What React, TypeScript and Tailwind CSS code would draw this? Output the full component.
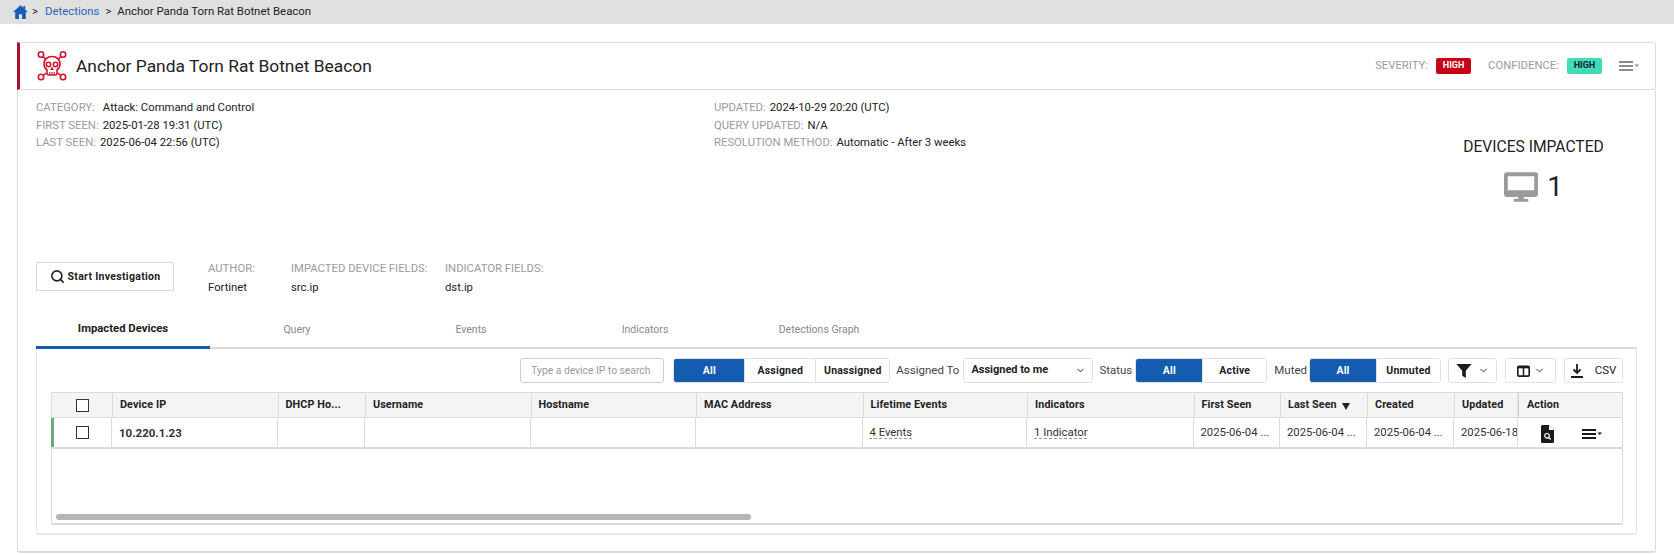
import { ChevronDown, Search } from "lucide-react";

const font = "font-['Roboto',sans-serif]";

const HomeIcon = () => (
  <svg width="15" height="14" viewBox="0 0 24 22" fill="#1a5db5">
    <path d="M12 0 0 11h3.500v11h6v-7.500h5V22h6V11H24L19.500 7V1.500h-3V4.300z" />
  </svg>
);

const SkullIcon = () => (
  <svg width="30" height="32" viewBox="0 0 30 32" fill="none" stroke="#d0142c" strokeWidth="1.600">
    <circle cx="4" cy="4.500" r="2.700" />
    <circle cx="26" cy="4.500" r="2.700" />
    <circle cx="4" cy="27" r="2.700" />
    <circle cx="26" cy="27" r="2.700" />
    <path d="M6 6.500 9 9.500M24 6.500l-3 3M6.300 25.500l3-2.500M23.700 25.500l-3-2.500" />
    <path d="M15 6.500c-5 0-8 3.300-8 7.500 0 3 1.300 4.800 3 6v3.500c0 1 .6 1.500 1.500 1.500h7c.9 0 1.500-.5 1.500-1.500V20c1.700-1.200 3-3 3-6 0-4.200-3-7.500-8-7.500z" />
    <circle cx="11.500" cy="14.500" r="2.200" />
    <circle cx="18.500" cy="14.500" r="2.200" />
    <path d="M15 17.500l-1 2h2zM12.800 22v3M15 22v3M17.200 22v3" strokeWidth="1.100" />
  </svg>
);

const MenuIcon = ({ color }: { color: string }) => (
  <svg width="20" height="10" viewBox="0 0 20 10" fill={color}>
    <rect x="0" y="0" width="14" height="2" />
    <rect x="0" y="4" width="14" height="2" />
    <rect x="0" y="8" width="14" height="2" />
    <path d="M15.500 3.500h4.500l-2.250 2.400z" />
  </svg>
);

const MonitorIcon = () => (
  <svg width="34" height="30" viewBox="0 0 36 31" fill="#9a9a9a">
    <path fillRule="evenodd" d="M3 0h30a3 3 0 0 1 3 3v20a3 3 0 0 1-3 3H3a3 3 0 0 1-3-3V3a3 3 0 0 1 3-3zm1 4v15h28V4z" />
    <path d="M15 26h6v2h3.500a1.500 1.500 0 0 1 0 3h-13a1.500 1.500 0 0 1 0-3H15z" />
  </svg>
);

const FilterIcon = () => (
  <svg width="16" height="14" viewBox="0 0 14 13" fill="#1b1b1b">
    <path d="M0 0h14L8.700 6.200V13l-3.400-2.200v-4.600z" />
  </svg>
);

const ColumnsIcon = () => (
  <svg width="13" height="12" viewBox="0 0 12 11" fill="none" stroke="#1b1b1b">
    <rect x="0.750" y="1.200" width="10.500" height="9" rx="1" strokeWidth="1.500" />
    <path d="M0.750 2h10.500" strokeWidth="2" />
    <path d="M6 2v8" strokeWidth="1.400" />
  </svg>
);

const DownloadIcon = () => (
  <svg width="12" height="14" viewBox="0 0 12 14" fill="none" stroke="#1b1b1b" strokeWidth="1.800">
    <path d="M6 0v8.500M2.500 5.500 6 9l3.500-3.500M0 13h12" />
  </svg>
);

const FileSearchIcon = () => (
  <svg width="13" height="18" viewBox="0 0 13 18">
    <path d="M1.500 0H8l5 5v11.500a1.500 1.500 0 0 1-1.500 1.500h-10A1.500 1.500 0 0 1 0 16.500v-15A1.500 1.500 0 0 1 1.500 0z" fill="#1b1b1b" />
    <path d="M8 0v5h5" fill="#fff" />
    <circle cx="6" cy="10.800" r="2.300" fill="none" stroke="#fff" strokeWidth="1.200" />
    <path d="m7.700 12.500 2 2" stroke="#fff" strokeWidth="1.300" />
  </svg>
);

const Checkbox = () => <div className="w-[13px] h-[13px] border-[1.5px] border-[#333] bg-white" />;

const Meta = ({ label, value, gap }: { label: string; value: string; gap?: string }) => (
  <div className={`flex h-[17.5px] items-center ${gap ?? "gap-1"}`}>
    <span className="text-[#9b9b9b]">{label}</span>
    <span className="text-[#222]">{value}</span>
  </div>
);

const Field = ({ label, value, width }: { label: string; value: string; width: string }) => (
  <div className={`flex flex-col gap-1 text-[11.3px] ${width}`}>
    <span className="text-[#9b9b9b] leading-[15px]">{label}</span>
    <span className="text-[#222] leading-[15px]">{value}</span>
  </div>
);

const Seg = ({ options, widths }: { options: string[]; widths: string[] }) => (
  <div className="flex h-[25px] rounded-[3px] border border-[#e2e2e2] overflow-hidden text-[10.5px] font-bold tracking-[0.2px]">
    {options.map((o, i) => (
      <div
        key={o}
        className={`flex items-center justify-center ${widths[i]} ${
          i === 0 ? "bg-[#135cb0] text-white" : "bg-white text-[#222] border-l border-[#e2e2e2]"
        }`}
      >
        {o}
      </div>
    ))}
  </div>
);

const columns = [
  { name: "Device IP", width: "w-[165.500px]" },
  { name: "DHCP Ho...", width: "w-[87.500px]" },
  { name: "Username", width: "w-[165.500px]" },
  { name: "Hostname", width: "w-[165.500px]" },
  { name: "MAC Address", width: "w-[166.500px]" },
  { name: "Lifetime Events", width: "w-[164.500px]" },
  { name: "Indicators", width: "w-[166.500px]" },
  { name: "First Seen", width: "w-[86.500px]" },
  { name: "Last Seen", width: "w-[87px]" },
  { name: "Created", width: "w-[87px]" },
  { name: "Updated", width: "w-[64px]" },
];

const dashed = "underline decoration-dashed decoration-[#999] underline-offset-2";

const cells: Record<string, { text: string; cls?: string }> = {
  "Device IP": { text: "10.220.1.23", cls: "font-bold text-[11.500px]" },
  "Lifetime Events": { text: "4 Events", cls: dashed },
  Indicators: { text: "1 Indicator", cls: dashed },
  "First Seen": { text: "2025-06-04 ..." },
  "Last Seen": { text: "2025-06-04 ..." },
  Created: { text: "2025-06-04 ..." },
  Updated: { text: "2025-06-18" },
};

export default function App() {
  return (
    <div className={`${font} w-[1674px] h-[555px] bg-white overflow-hidden text-[#222]`}>
      <div className="h-6 bg-[#e0e0e0] flex items-center pl-[13px] gap-[5px] text-[11.4px]">
        <HomeIcon />
        <span className="-ml-[1px]">&gt;</span>
        <span className="text-[#2a66b5] ml-[2px]">Detections</span>
        <span className="ml-[1px]">&gt;</span>
        <span className="ml-[1px]">Anchor Panda Torn Rat Botnet Beacon</span>
      </div>

      <div className="ml-[17px] w-[1639px] mt-[18px]">
        <div className="h-[48px] flex items-center border border-[#dcdcdc] border-l-[3px] border-l-[#a8112a] rounded-tr-[3px] rounded-br-[3px]">
          <div className="ml-[17px]"><SkullIcon /></div>
          <h1 className="ml-[9px] text-[17.4px] text-[#222]">Anchor Panda Torn Rat Botnet Beacon</h1>
          <div className="ml-auto flex items-center text-[11.3px] text-[#9b9b9b] pr-[16px]">
            <span>SEVERITY:</span>
            <span className="ml-2 w-[35px] h-4 rounded-[2px] bg-[#c70017] text-white text-[9px] font-bold flex items-center justify-center">HIGH</span>
            <span className="ml-[17px]">CONFIDENCE:</span>
            <span className="ml-2 w-[35px] h-4 rounded-[2px] bg-[#3fdcb8] text-[#123] text-[9px] font-bold flex items-center justify-center">HIGH</span>
            <div className="ml-[17px]"><MenuIcon color="#8c8c8c" /></div>
          </div>
        </div>

        <div className="h-[463px] border border-t-0 border-[#dcdcdc] rounded-b-[3px] border-b-2 flex flex-col">
          <div className="flex h-[172px] text-[11.3px]">
            <div className="w-[696px] pl-[18px] pt-[10px]">
              <Meta label="CATEGORY:" value="Attack: Command and Control" gap="gap-[8px]" />
              <Meta label="FIRST SEEN:" value="2025-01-28 19:31 (UTC)" />
              <Meta label="LAST SEEN:" value="2025-06-04 22:56 (UTC)" />
            </div>
            <div className="w-[622px] pt-[10px]">
              <Meta label="UPDATED:" value="2024-10-29 20:20 (UTC)" />
              <Meta label="QUERY UPDATED:" value="N/A" />
              <Meta label="RESOLUTION METHOD:" value="Automatic - After 3 weeks" />
            </div>
            <div className="flex-1 flex flex-col items-center pt-[48px] pl-[76px]">
              <div className="text-[15.6px] whitespace-nowrap leading-[18px]">DEVICES IMPACTED</div>
              <div className="flex items-center gap-[9px] mt-[15px]">
                <MonitorIcon />
                <span className="text-[28px] leading-[31px]">1</span>
              </div>
            </div>
          </div>

          <div className="flex items-center h-[29px] pl-[18px]">
            <button className="w-[138px] h-[29px] border border-[#d8d8d8] rounded-[1px] flex items-center justify-center gap-[3px] text-[10.5px] font-bold tracking-[0.3px]">
              <Search size={15} strokeWidth={2.5} />
              Start Investigation
            </button>
            <div className="flex ml-[34px] mt-[2px]">
              <Field label="AUTHOR:" value="Fortinet" width="w-[83px]" />
              <Field label="IMPACTED DEVICE FIELDS:" value="src.ip" width="w-[154px]" />
              <Field label="INDICATOR FIELDS:" value="dst.ip" width="w-[150px]" />
            </div>
          </div>

          <div className="ml-[18px] mt-[14px] flex-1 flex flex-col mb-[16px] w-[1601px]">
            <div className="flex h-[44px] border-b-2 border-[#dcdcdc] text-[10.5px] text-[#888]">
              <div className="w-[174px] h-[44px] border-b-[3px] border-[#135cb0] flex items-center justify-center font-bold text-[11.3px] text-[#222] pt-[7px]">Impacted Devices</div>
              <div className="w-[174px] flex items-center justify-center pt-[7px]">Query</div>
              <div className="w-[174px] flex items-center justify-center pt-[7px]">Events</div>
              <div className="w-[174px] flex items-center justify-center pt-[7px]">Indicators</div>
              <div className="w-[174px] flex items-center justify-center pt-[7px]">Detections Graph</div>
            </div>

            <div className="flex-1 border border-t-0 border-[#e6e6e6] border-b-2 rounded-b-[2px] pl-[14px] pr-[13px] pb-[8px] flex flex-col">
              <div className="h-[43px] flex items-center justify-end text-[11.5px]">
                <div className="w-[144px] h-[25px] border border-[#cfcfcf] rounded-[3px] pl-[10px] flex items-center text-[10.3px] text-[#9b9b9b]">Type a device IP to search</div>
                <div className="ml-[9px]">
                  <Seg options={["All", "Assigned", "Unassigned"]} widths={["w-[70px]", "w-[71px]", "w-[74px]"]} />
                </div>
                <span className="ml-[6px] text-[#444]">Assigned To</span>
                <div className="ml-[4px] w-[130px] h-[25px] border border-[#e2e2e2] rounded-[3px] flex items-center justify-between pl-[7px] pr-[6px] text-[11px] font-bold">
                  Assigned to me
                  <ChevronDown size={11} strokeWidth={2} />
                </div>
                <span className="ml-[6px] text-[#444]">Status</span>
                <div className="ml-[3px]">
                  <Seg options={["All", "Active"]} widths={["w-[66px]", "w-[64px]"]} />
                </div>
                <span className="ml-[7px] text-[#444]">Muted</span>
                <div className="ml-[2px]">
                  <Seg options={["All", "Unmuted"]} widths={["w-[66px]", "w-[64px]"]} />
                </div>
                <div className="ml-[7px] w-[49px] h-[25px] border border-[#e2e2e2] rounded-[3px] flex items-center justify-center gap-[6px]">
                  <FilterIcon />
                  <ChevronDown size={11} strokeWidth={2} />
                </div>
                <div className="ml-[8px] w-[51px] h-[25px] border border-[#e2e2e2] rounded-[3px] flex items-center justify-center gap-[4px]">
                  <ColumnsIcon />
                  <ChevronDown size={11} strokeWidth={2} />
                </div>
                <div className="ml-[8px] w-[59px] h-[25px] border border-[#e2e2e2] rounded-[3px] flex items-center justify-center gap-[12px] text-[11.5px]">
                  <DownloadIcon />
                  CSV
                </div>
              </div>

              <div className="relative flex-1 border border-[#dcdcdc] border-b-2 flex flex-col">
                <div className="flex h-[25px] bg-[#f4f4f4] border-b border-[#dcdcdc] text-[10.8px] font-bold tracking-[0.1px]">
                  <div className="w-[61px] flex items-center justify-center border-r border-[#dcdcdc]"><Checkbox /></div>
                  {columns.map((c) => (
                    <div key={c.name} className={`${c.width} flex items-center gap-[5px] px-[7px] border-r border-[#dcdcdc] whitespace-nowrap`}>
                      {c.name}
                      {c.name === "Last Seen" && <span className="w-0 h-0 border-x-[4.500px] border-x-transparent border-t-[7px] border-t-[#222] mt-[2px]" />}
                    </div>
                  ))}
                  <div className="flex-1 flex items-center px-[8px] shadow-[-2px_0_2px_rgba(0,0,0,0.08)]">Action</div>
                </div>
                <div className="flex h-[31px] border-b-2 border-[#dcdcdc] text-[11.3px] text-[#333]">
                  <div className="w-[61px] flex items-center justify-center border-r border-[#dcdcdc] border-l-[3px] border-l-[#6aa97c] -ml-px"><Checkbox /></div>
                  {columns.map((c) => (
                    <div key={c.name} className={`${c.width} flex items-center px-[7px] pt-[2px] border-r border-[#dcdcdc] whitespace-nowrap overflow-hidden ${c.name === "Updated" ? "pr-0" : ""}`}>
                      {cells[c.name] && <span className={cells[c.name].cls}>{cells[c.name].text}</span>}
                    </div>
                  ))}
                  <div className="flex-1 flex items-center justify-between pl-[23px] pr-[20px] pt-[2px]">
                    <FileSearchIcon />
                    <MenuIcon color="#1b1b1b" />
                  </div>
                </div>
                <div className="flex-1 relative">
                  <div className="absolute left-[4px] bottom-[3px] w-[695px] h-[6px] rounded-full bg-[#b5b5b5]" />
                </div>
              </div>
            </div>
          </div>
        </div>
      </div>
    </div>
  );
}
